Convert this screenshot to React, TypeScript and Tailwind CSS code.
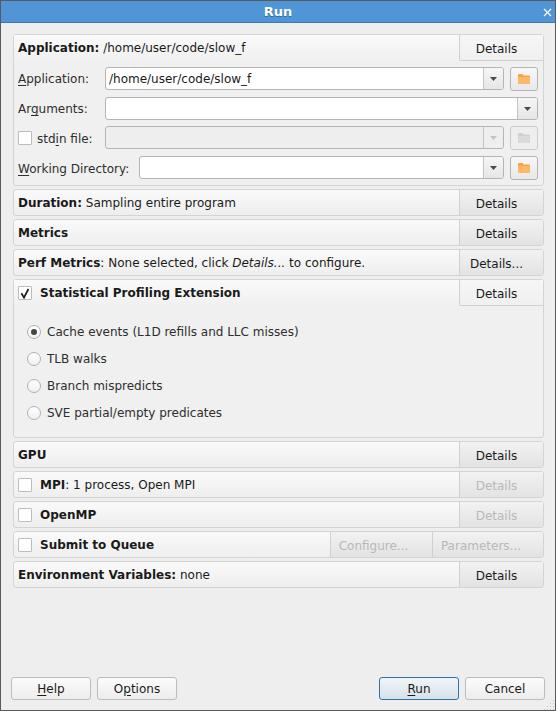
import type { ReactNode } from "react";

const Folder = ({ off }: { off?: boolean }) => (
  <svg width="12" height="10" viewBox="0 0 12 10" className="block">
    <path d="M0 1 Q0 0 1 0 H4.5 L5.5 1.5 H11 Q12 1.5 12 2.5 V9.5 Q12 10 11.5 10 H0.5 Q0 10 0 9.5 Z" fill={off ? "#cfcfcf" : "#f8a445"} />
    <rect x="0" y="3" width="12" height="7" rx="0.5" fill={off ? "#dadada" : "#fdb968"} />
  </svg>
);

const Arrow = ({ off }: { off?: boolean }) => (
  <svg width="7" height="4" viewBox="0 0 7 4" className="block">
    <path d="M0 0 H7 L3.5 4 Z" fill={off ? "#c4c4c4" : "#4a4a4a"} />
  </svg>
);

const Check = () => (
  <svg width="10" height="11" viewBox="0 0 10 11" className="block">
    <path d="M1.4 5.2 L4 9.6 L8.4 1" fill="none" stroke="#1a1a1a" strokeWidth="1.7" />
  </svg>
);

const CheckBox = ({ checked }: { checked?: boolean }) => (
  <span className="flex h-[14px] w-[14px] shrink-0 items-center justify-center rounded-[1px] border border-[#bdbdbd] bg-white">
    {checked && <Check />}
  </span>
);

const Key = ({ children }: { children: string }) => <u className="underline-offset-2">{children}</u>;

const Combo = ({ value, off }: { value?: string; off?: boolean }) => (
  <div className={`flex h-[23px] min-w-0 flex-1 rounded-[3px] border border-[#b4b4b4] ${off ? "bg-[#eeeeee]" : "bg-white"}`}>
    <span className="flex-1 truncate pl-[3px] leading-[22px] text-[#1a1a1a]">{value}</span>
    <span className={`flex w-[20px] shrink-0 items-center justify-center rounded-r-[2px] border-l border-[#c4c4c4] ${off ? "bg-[#eeeeee]" : "bg-gradient-to-b from-[#f6f6f6] to-[#e6e6e6]"}`}>
      <Arrow off={off} />
    </span>
  </div>
);

const Browse = ({ off }: { off?: boolean }) => (
  <button className={`ml-[6px] flex h-[24px] w-[28px] shrink-0 items-center justify-center rounded-[3px] border ${off ? "border-[#cccccc] bg-[#eeeeee]" : "border-[#b4b4b4] bg-gradient-to-b from-[#f8f8f8] to-[#e8e8e8]"}`}>
    <Folder off={off} />
  </button>
);

const SideButton = ({ label, off, open, size }: { label: string; off?: boolean; open?: boolean; size?: string }) => (
  <button
    className={`shrink-0 border-l border-[#d0d0d0] pt-[2px] text-center ${size ?? "w-[84px] pr-[10px]"} ${off ? "text-[#b8b8b8]" : "text-[#1a1a1a]"} ${
      open ? "h-[26px] rounded-bl-[2px] border-b bg-gradient-to-b from-[#f6f6f6] to-[#f0f0f0]" : "h-[25px] bg-gradient-to-b from-[#f2f2f2] to-[#e3e3e3]"
    }`}
  >
    {label}
  </button>
);

const Row = ({ children, label = "Details", off }: { children: ReactNode; label?: string; off?: boolean }) => (
  <div className="flex h-[27px] items-center rounded-[3px] border border-[#d4d4d4] bg-gradient-to-b from-[#fafafa] to-[#eeeeee]">
    <div className="flex min-w-0 flex-1 items-center gap-[8px] pl-[4px] text-[#1a1a1a]">{children}</div>
    <SideButton label={label} off={off} />
  </div>
);

const Radio = ({ label, on }: { label: string; on?: boolean }) => (
  <div className="flex h-[27px] items-center gap-[6px] text-[#2e2e2e]">
    <span className="flex h-[14px] w-[14px] items-center justify-center rounded-full border border-[#b0b0b0] bg-gradient-to-b from-[#ffffff] to-[#f0f0f0]">
      {on && <span className="h-[6px] w-[6px] rounded-full bg-[#444444]" />}
    </span>
    {label}
  </div>
);

const FootButton = ({ children, primary }: { children: ReactNode; primary?: boolean }) => (
  <button
    className={`h-[23px] w-[80px] rounded-[3px] border text-[#1a1a1a] ${
      primary ? "border-[#2f74a6] bg-gradient-to-b from-[#f0f5f8] to-[#d7e2e8]" : "border-[#bcbcbc] bg-gradient-to-b from-[#fbfbfb] to-[#ededed]"
    }`}
  >
    {children}
  </button>
);

const Grip = () => (
  <svg width="11" height="11" viewBox="0 0 11 11" className="absolute bottom-0 right-0">
    <g fill="#c8c8c8">
      <rect x="9" y="1" width="1" height="1" />
      <rect x="6" y="4" width="1" height="1" />
      <rect x="9" y="4" width="1" height="1" />
      <rect x="3" y="7" width="1" height="1" />
      <rect x="6" y="7" width="1" height="1" />
      <rect x="9" y="7" width="1" height="1" />
      <rect x="0" y="10" width="1" height="1" />
      <rect x="3" y="10" width="1" height="1" />
      <rect x="6" y="10" width="1" height="1" />
      <rect x="9" y="10" width="1" height="1" />
    </g>
  </svg>
);

export default function App() {
  return (
    <div className="relative flex h-[711px] w-[556px] flex-col overflow-hidden border border-[#5a5a5a] bg-[#eeeeee] font-['DejaVu_Sans',sans-serif] text-[12px]">
      <div className="relative flex h-[22px] shrink-0 items-center justify-center border-b border-[#3f79ab] bg-[#5096d6] text-[13px] font-bold text-white [text-shadow:0_1px_1px_#2e6596]">
        Run
        <svg width="9" height="9" viewBox="0 0 9 9" className="absolute right-[3px] top-[7px]">
          <path d="M1 1 L8 8 M8 1 L1 8" stroke="#ffffff" strokeWidth="1.2" />
        </svg>
      </div>

      <div className="flex flex-1 flex-col pl-[12px] pr-[11px] pt-[11px]">
        <div className="flex flex-col gap-[3px]">
          <div className="rounded-[3px] border border-[#d4d4d4] bg-[#f0f0f0]">
            <div className="flex h-[26px] items-center bg-gradient-to-b from-[#fafafa] to-[#f0f0f0]">
              <div className="flex-1 pl-[4px] text-[#1a1a1a]">
                <b>Application:</b> /home/user/code/slow_f
              </div>
              <SideButton label="Details" open />
            </div>
            <div className="flex flex-col gap-[6px] pb-[5px] pl-[4px] pr-[5px] pt-[6px] text-[#2e2e2e]">
              <div className="flex items-start">
                <span className="h-[23px] w-[87px] shrink-0 leading-[25px]"><Key>A</Key>pplication:</span>
                <Combo value="/home/user/code/slow_f" />
                <Browse />
              </div>
              <div className="flex items-start">
                <span className="h-[23px] w-[87px] shrink-0 leading-[25px]">Ar<Key>g</Key>uments:</span>
                <Combo />
              </div>
              <div className="flex items-start">
                <span className="flex h-[23px] w-[87px] shrink-0 items-center gap-[5px]">
                  <CheckBox />
                  <span className="pt-[2px]">std<Key>i</Key>n file:</span>
                </span>
                <Combo off />
                <Browse off />
              </div>
              <div className="flex items-start">
                <span className="h-[23px] w-[121px] shrink-0 leading-[27px]"><Key>W</Key>orking Directory:</span>
                <Combo />
                <Browse />
              </div>
            </div>
          </div>

          <Row><span><b>Duration:</b> Sampling entire program</span></Row>
          <Row><b>Metrics</b></Row>
          <Row label="Details..."><span><b>Perf Metrics</b>: None selected, click <i>Details...</i> to configure.</span></Row>

          <div className="h-[159px] rounded-[3px] border border-[#d4d4d4] bg-[#f0f0f0]">
            <div className="flex h-[26px] items-center bg-gradient-to-b from-[#fafafa] to-[#f0f0f0]">
              <div className="flex flex-1 items-center gap-[8px] pl-[4px] text-[#1a1a1a]">
                <CheckBox checked />
                <b>Statistical Profiling Extension</b>
              </div>
              <SideButton label="Details" open />
            </div>
            <div className="flex flex-col pl-[13px] pt-[12px]">
              <Radio label="Cache events (L1D refills and LLC misses)" on />
              <Radio label="TLB walks" />
              <Radio label="Branch mispredicts" />
              <Radio label="SVE partial/empty predicates" />
            </div>
          </div>

          <Row><b>GPU</b></Row>
          <Row off><CheckBox /><span><b>MPI</b>: 1 process, Open MPI</span></Row>
          <Row off><CheckBox /><b>OpenMP</b></Row>
          <div className="flex h-[27px] items-center rounded-[3px] border border-[#d4d4d4] bg-gradient-to-b from-[#fafafa] to-[#eeeeee]">
            <div className="flex flex-1 items-center gap-[8px] pl-[4px] text-[#1a1a1a]">
              <CheckBox />
              <b>Submit to Queue</b>
            </div>
            <SideButton label="Configure..." off size="w-[102px] pr-[16px]" />
            <SideButton label="Parameters..." off size="w-[111px] pr-[14px]" />
          </div>
          <Row><span><b>Environment Variables:</b> none</span></Row>
        </div>

        <div className="-ml-[2px] -mr-[1px] mt-auto flex justify-between pb-[10px]">
          <div className="flex gap-[6px]">
            <FootButton><Key>H</Key>elp</FootButton>
            <FootButton>O<Key>p</Key>tions</FootButton>
          </div>
          <div className="flex gap-[6px]">
            <FootButton primary><Key>R</Key>un</FootButton>
            <FootButton>Cancel</FootButton>
          </div>
        </div>
      </div>
      <Grip />
    </div>
  );
}
